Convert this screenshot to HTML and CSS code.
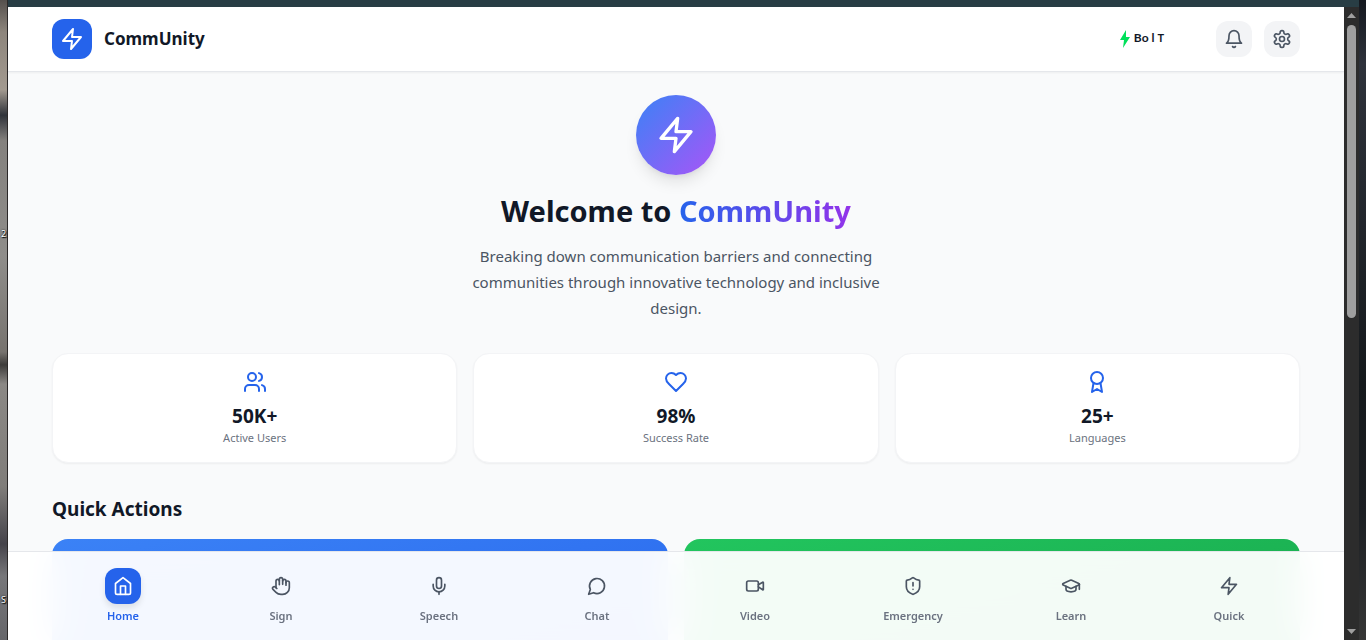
FILE: index.html
```
<!DOCTYPE html>
<html lang="en">
<head>
  <meta charset="UTF-8">
  <meta name="viewport" content="width=device-width, initial-scale=1.0">
  <title>CommUnity</title>
  <link rel="stylesheet" href="styles.css">
</head>
<body>

<div class="desktop">
  <div class="wallpaper left">
    <span class="shortcut one">2</span>
    <span class="shortcut two">S</span>
  </div>

  <div class="window">
    <div class="titlebar"></div>
    <div class="viewport">
      <div class="page">

        <!-- header -->
        <header class="header">
          <div class="container header-inner">
            <a class="brand" href="#">
              <span class="brand-logo">
                <svg class="icon" viewBox="0 0 24 24"><path d="M13 2 3 14h9l-1 8 10-12h-9l1-8z"/></svg>
              </span>
              <span class="brand-name">CommUnity</span>
            </a>
            <div class="header-right">
              <a class="bolt" href="#">
                <svg viewBox="0 0 10 18"><path d="M6 0L0 10h4L3 18l7-11H6z"/></svg>
                <span>Bo l <small>T</small></span>
              </a>
              <button class="icon-btn" type="button" aria-label="Notifications">
                <svg class="icon" viewBox="0 0 24 24"><path d="M6 8a6 6 0 0 1 12 0c0 7 3 9 3 9H3s3-2 3-9"/><path d="M10.3 21a1.94 1.94 0 0 0 3.4 0"/></svg>
              </button>
              <button class="icon-btn" type="button" aria-label="Settings">
                <svg class="icon" viewBox="0 0 24 24"><path d="M12.22 2h-.44a2 2 0 0 0-2 2v.18a2 2 0 0 1-1 1.73l-.43.25a2 2 0 0 1-2 0l-.15-.08a2 2 0 0 0-2.73.73l-.22.38a2 2 0 0 0 .73 2.73l.15.1a2 2 0 0 1 1 1.72v.51a2 2 0 0 1-1 1.74l-.15.09a2 2 0 0 0-.73 2.73l.22.38a2 2 0 0 0 2.73.73l.15-.08a2 2 0 0 1 2 0l.43.25a2 2 0 0 1 1 1.73V20a2 2 0 0 0 2 2h.44a2 2 0 0 0 2-2v-.18a2 2 0 0 1 1-1.73l.43-.25a2 2 0 0 1 2 0l.15.08a2 2 0 0 0 2.73-.73l.22-.39a2 2 0 0 0-.73-2.73l-.15-.08a2 2 0 0 1-1-1.74v-.5a2 2 0 0 1 1-1.74l.15-.09a2 2 0 0 0 .73-2.73l-.22-.38a2 2 0 0 0-2.73-.73l-.15.08a2 2 0 0 1-2 0l-.43-.25a2 2 0 0 1-1-1.73V4a2 2 0 0 0-2-2z"/><circle cx="12" cy="12" r="3"/></svg>
              </button>
            </div>
          </div>
        </header>

        <main class="container main">
          <!-- welcome -->
          <section class="hero">
            <div class="hero-logo">
              <svg class="icon" viewBox="0 0 24 24"><path d="M13 2 3 14h9l-1 8 10-12h-9l1-8z"/></svg>
            </div>
            <h1>Welcome to <span>CommUnity</span></h1>
            <p>Breaking down communication barriers and connecting communities through innovative technology and inclusive design.</p>
          </section>

          <!-- stats -->
          <section class="stats">
            <div class="stat">
              <svg class="icon" viewBox="0 0 24 24"><path d="M16 21v-2a4 4 0 0 0-4-4H6a4 4 0 0 0-4 4v2"/><circle cx="9" cy="7" r="4"/><path d="M22 21v-2a4 4 0 0 0-3-3.87"/><path d="M16 3.13a4 4 0 0 1 0 7.75"/></svg>
              <strong>50K+</strong>
              <span>Active Users</span>
            </div>
            <div class="stat">
              <svg class="icon" viewBox="0 0 24 24"><path d="M19 14c1.49-1.46 3-3.21 3-5.5A5.5 5.5 0 0 0 16.5 3c-1.76 0-3 .5-4.5 2-1.5-1.5-2.74-2-4.5-2A5.5 5.5 0 0 0 2 8.5c0 2.3 1.5 4.05 3 5.5l7 7Z"/></svg>
              <strong>98%</strong>
              <span>Success Rate</span>
            </div>
            <div class="stat">
              <svg class="icon" viewBox="0 0 24 24"><circle cx="12" cy="8" r="6"/><path d="M15.477 12.89 17 22l-5-3-5 3 1.523-9.11"/></svg>
              <strong>25+</strong>
              <span>Languages</span>
            </div>
          </section>

          <!-- quick actions -->
          <section>
            <h2>Quick Actions</h2>
            <div class="actions">
              <a class="action blue" href="#" aria-label="Sign"></a>
              <a class="action green" href="#" aria-label="Speech"></a>
            </div>
          </section>
        </main>

        <!-- bottom nav -->
        <nav class="bottom-nav">
          <div class="nav-inner">
            <a class="nav-item active" href="#">
              <span class="nav-icon"><svg class="icon" viewBox="0 0 24 24"><path d="m3 9 9-7 9 7v11a2 2 0 0 1-2 2H5a2 2 0 0 1-2-2z"/><path d="M9 22V12h6v10"/></svg></span>
              <span class="nav-label">Home</span>
            </a>
            <a class="nav-item" href="#">
              <span class="nav-icon"><svg class="icon" viewBox="0 0 24 24"><path d="M18 11V6a2 2 0 0 0-4 0"/><path d="M14 10V4a2 2 0 0 0-4 0v2"/><path d="M10 10.5V6a2 2 0 0 0-4 0v8"/><path d="M18 8a2 2 0 1 1 4 0v6a8 8 0 0 1-8 8h-2c-2.8 0-4.5-.86-5.99-2.34l-3.6-3.6a2 2 0 0 1 2.83-2.82L7 15"/></svg></span>
              <span class="nav-label">Sign</span>
            </a>
            <a class="nav-item" href="#">
              <span class="nav-icon"><svg class="icon" viewBox="0 0 24 24"><path d="M12 2a3 3 0 0 0-3 3v7a3 3 0 0 0 6 0V5a3 3 0 0 0-3-3Z"/><path d="M19 10v2a7 7 0 0 1-14 0v-2"/><path d="M12 19v3"/></svg></span>
              <span class="nav-label">Speech</span>
            </a>
            <a class="nav-item" href="#">
              <span class="nav-icon"><svg class="icon" viewBox="0 0 24 24"><path d="M7.9 20A9 9 0 1 0 4 16.1L2 22Z"/></svg></span>
              <span class="nav-label">Chat</span>
            </a>
            <a class="nav-item" href="#">
              <span class="nav-icon"><svg class="icon" viewBox="0 0 24 24"><path d="m16 13 5.223 3.482a.5.5 0 0 0 .777-.416V7.87a.5.5 0 0 0-.752-.432L16 10.5"/><rect x="2" y="6" width="14" height="12" rx="2"/></svg></span>
              <span class="nav-label">Video</span>
            </a>
            <a class="nav-item" href="#">
              <span class="nav-icon"><svg class="icon" viewBox="0 0 24 24"><path d="M20 13c0 5-3.5 7.5-7.66 8.95a1 1 0 0 1-.67-.01C7.5 20.5 4 18 4 13V6a1 1 0 0 1 1-1c2 0 4.5-1.2 6.24-2.72a1.17 1.17 0 0 1 1.52 0C14.51 3.81 17 5 19 5a1 1 0 0 1 1 1z"/><path d="M12 8v4"/><path d="M12 16h.01"/></svg></span>
              <span class="nav-label">Emergency</span>
            </a>
            <a class="nav-item" href="#">
              <span class="nav-icon"><svg class="icon" viewBox="0 0 24 24"><path d="M21.42 10.922a1 1 0 0 0-.019-1.838L12.83 5.18a2 2 0 0 0-1.66 0L2.6 9.08a1 1 0 0 0 0 1.832l8.57 3.908a2 2 0 0 0 1.66 0z"/><path d="M22 10v6"/><path d="M6 12.5V16a6 3 0 0 0 12 0v-3.5"/></svg></span>
              <span class="nav-label">Learn</span>
            </a>
            <a class="nav-item" href="#">
              <span class="nav-icon"><svg class="icon" viewBox="0 0 24 24"><path d="M13 2 3 14h9l-1 8 10-12h-9l1-8z"/></svg></span>
              <span class="nav-label">Quick</span>
            </a>
          </div>
        </nav>
      </div>

      <!-- scrollbar -->
      <div class="scrollbar">
        <svg viewBox="0 0 9 5"><path d="M4.5 0L9 5H0z"/></svg>
        <div class="track"><div class="thumb"></div></div>
        <svg viewBox="0 0 9 5"><path d="M4.5 5L9 0H0z"/></svg>
      </div>
    </div>
  </div>

  <div class="wallpaper right"></div>
</div>

</body>
</html>
```
FILE: styles.css
```
* {
  margin: 0;
  padding: 0;
  box-sizing: border-box;
}

body {
  font-family: "Segoe UI", "Noto Sans", sans-serif;
  font-size: 15px;
  color: #111827;
}

a {
  color: inherit;
  text-decoration: none;
}

.icon {
  display: block;
  width: 20px;
  height: 20px;
  fill: none;
  stroke: currentColor;
  stroke-width: 2;
  stroke-linecap: round;
  stroke-linejoin: round;
}

/* desktop around the window */
.desktop {
  display: flex;
  height: 100vh;
  overflow: hidden;
}

.wallpaper {
  position: relative;
  overflow: hidden;
}

.wallpaper.left {
  width: 8px;
  border-right: 1px solid #2b2828;
  background: linear-gradient(#55504d 0, #8d857c 5%, #a39a90 14%, #30333a 18%, #84817e 22%, #8f8d8a 40%, #77736f 55%, #3d3b3a 57%, #8b8885 60%, #807d7a 76%, #45434a 85%, #77777a 90%, #66666a 100%);
}

.wallpaper.right {
  width: 7px;
  background: linear-gradient(#14181f 0, #2e323b 10%, #22262c 35%, #15191c 60%, #1c1f23 80%, #363636 100%);
}

.shortcut {
  position: absolute;
  left: 1px;
  font-size: 9px;
  line-height: 16px;
  color: #fff;
  text-shadow: 0 0 2px #000, 1px 1px 1px #000;
}

.shortcut.one {
  top: 226px;
}

.shortcut.two {
  top: 592px;
}

.window {
  flex: 1;
  display: flex;
  flex-direction: column;
  min-width: 0;
}

.titlebar {
  height: 7px;
  background: #283d44;
}

.viewport {
  flex: 1;
  display: flex;
  min-height: 0;
}

.page {
  flex: 1;
  position: relative;
  overflow: hidden;
  background: #f9fafb;
}

.container {
  max-width: 1280px;
  margin: 0 auto;
  padding: 0 16px;
}

/* header */
.header {
  background: #fff;
  box-shadow: 0 1px 0 #e5e7eb, 0 2px 2px rgba(0, 0, 0, .05);
}

.header-inner {
  display: flex;
  align-items: center;
  justify-content: space-between;
  height: 64px;
}

.brand,
.header-right {
  display: flex;
  align-items: center;
  gap: 12px;
}

.brand-logo {
  padding: 8px;
  border-radius: 12px;
  background: #2563eb;
  color: #fff;
}

.brand-logo .icon {
  width: 24px;
  height: 24px;
}

.brand-name {
  font-size: 17px;
  line-height: 28px;
  font-weight: 700;
}

.bolt {
  display: flex;
  align-items: flex-start;
  gap: 4px;
  margin-right: 40px;
  font-family: Lato, sans-serif;
  font-size: 12px;
  line-height: 16px;
  font-weight: 700;
}

.bolt svg {
  width: 10px;
  height: 18px;
  fill: #00e05a;
}

.bolt small {
  font-size: 11px;
}

.icon-btn {
  padding: 8px;
  border: 0;
  border-radius: 12px;
  background: #f3f4f6;
  color: #4b5563;
}

/* welcome */
.main {
  padding-top: 24px;
}

.hero {
  display: flex;
  flex-direction: column;
  align-items: center;
  margin-bottom: 32px;
  text-align: center;
}

.hero-logo {
  padding: 20px;
  margin-bottom: 16px;
  border-radius: 50%;
  background: linear-gradient(to bottom right, #3b82f6, #a855f7);
  box-shadow: 0 10px 15px -3px rgba(0, 0, 0, .1), 0 4px 6px -4px rgba(0, 0, 0, .1);
  color: #fff;
}

.hero-logo .icon {
  width: 40px;
  height: 40px;
}

.hero h1 {
  margin-bottom: 12px;
  font-size: 29px;
  line-height: 40px;
  font-weight: 700;
}

.hero h1 span {
  background: linear-gradient(to right, #2563eb, #9333ea);
  -webkit-background-clip: text;
  background-clip: text;
  color: transparent;
}

.hero p {
  max-width: 448px;
  line-height: 26px;
  color: #4b5563;
}

/* stats */
.stats {
  display: grid;
  grid-template-columns: repeat(3, 1fr);
  gap: 16px;
  margin-bottom: 32px;
}

.stat {
  display: flex;
  flex-direction: column;
  align-items: center;
  padding: 16px;
  border: 1px solid #f3f4f6;
  border-radius: 16px;
  background: #fff;
  box-shadow: 0 1px 2px rgba(0, 0, 0, .05);
}

.stat .icon {
  width: 24px;
  height: 24px;
  margin-bottom: 8px;
  color: #2563eb;
}

.stat strong {
  font-size: 19px;
  line-height: 28px;
}

.stat span {
  font-size: 11px;
  line-height: 16px;
  color: #6b7280;
}

/* quick actions */
h2 {
  margin-bottom: 16px;
  font-size: 19px;
  line-height: 28px;
  font-weight: 700;
}

.actions {
  display: grid;
  grid-template-columns: repeat(2, 1fr);
  gap: 16px;
}

.action {
  height: 176px;
  border-radius: 16px;
}

.action.blue {
  background: linear-gradient(to bottom right, #3b82f6, #2563eb);
}

.action.green {
  background: linear-gradient(to bottom right, #22c55e, #16a34a);
}

/* bottom nav, lies over the page */
.bottom-nav {
  position: absolute;
  left: 0;
  right: 0;
  bottom: 0;
  border-top: 1px solid #e5e7eb;
  background: rgba(255, 255, 255, .95);
  backdrop-filter: blur(16px);
}

.nav-inner {
  display: flex;
  max-width: 1280px;
  margin: 0 auto;
  padding: 8px;
}

.nav-item {
  flex: 1;
  display: flex;
  flex-direction: column;
  align-items: center;
  gap: 4px;
  padding: 8px;
  color: #4b5563;
}

.nav-icon {
  padding: 8px;
  border-radius: 12px;
}

.nav-label {
  font-size: 11px;
  line-height: 16px;
  font-weight: 600;
  color: #6b7280;
}

.nav-item.active .nav-icon {
  background: #2563eb;
  color: #fff;
  box-shadow: 0 4px 6px rgba(0, 0, 0, .1);
}

.nav-item.active .nav-label {
  color: #2563eb;
}

/* scrollbar */
.scrollbar {
  display: flex;
  flex-direction: column;
  align-items: center;
  gap: 7px;
  width: 15px;
  padding: 6px 0;
  background: #2c2c2c;
}

.scrollbar svg {
  width: 9px;
  height: 5px;
  fill: #9f9f9f;
}

.track {
  flex: 1;
}

.thumb {
  width: 9px;
  height: 49%;
  border-radius: 5px;
  background: #9f9f9f;
}
```
